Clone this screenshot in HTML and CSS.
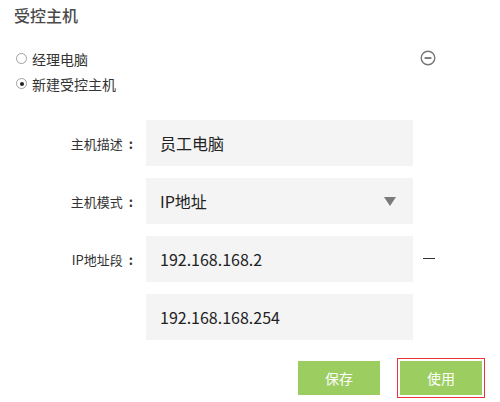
FILE: index.html
```
<!DOCTYPE html>
<html lang="zh-CN">
<head>
<meta charset="utf-8">
<link rel="stylesheet" href="styles.css">
</head>
<body>
<div class="page">
  <div class="title">受控主机</div>
  <div class="radios">
    <div class="radio-row">
      <label class="radio"><span class="dot"></span><span>经理电脑</span></label>
      <svg class="minus-circle" width="16" height="16" viewBox="0 0 16 16"><circle cx="8" cy="8" r="6.8" fill="none" stroke="#777" stroke-width="1.4"/><rect x="4.6" y="7.1" width="6.8" height="1.9" fill="#777"/></svg>
    </div>
    <div class="radio-row">
      <label class="radio"><span class="dot checked"></span><span>新建受控主机</span></label>
    </div>
  </div>
  <div class="form">
    <div class="row">
      <div class="label">主机描述<span class="colon">:</span></div>
      <div class="box">员工电脑</div>
    </div>
    <div class="row">
      <div class="label">主机模式<span class="colon">:</span></div>
      <div class="box select"><span>IP地址</span><span class="tri"></span></div>
    </div>
    <div class="row">
      <div class="label">IP地址段<span class="colon">:</span></div>
      <div class="box">192.168.168.2</div>
      <span class="dash"></span>
    </div>
    <div class="row">
      <div class="label"></div>
      <div class="box">192.168.168.254</div>
    </div>
  </div>
  <div class="buttons">
    <button class="btn">保存</button>
    <div class="highlight"><button class="btn">使用</button></div>
  </div>
</div>
</body>
</html>
```
FILE: styles.css
```
html, body {
  margin: 0;
  padding: 0;
  background: #fff;
}
.page {
  width: 500px;
  height: 402px;
  font-family: "Microsoft YaHei", "Noto Sans CJK SC", sans-serif;
  color: #333;
  display: flex;
  flex-direction: column;
  overflow: hidden;
}
.title {
  font-size: 16px;
  line-height: 20px;
  color: #4a4a4a;
  font-weight: 500;
  padding: 5px 0 0 14px;
}
.radios {
  margin-top: 21px;
  padding-left: 16px;
  padding-right: 64px;
  display: flex;
  flex-direction: column;
}
.radio-row {
  height: 25px;
  display: flex;
  align-items: center;
  justify-content: space-between;
}
.radio {
  display: flex;
  align-items: center;
  gap: 5px;
  font-size: 14px;
  line-height: 18px;
  color: #333;
}
.dot {
  width: 9px;
  height: 9px;
  border: 1px solid #a0a0a0;
  border-radius: 50%;
  background: #fff;
  display: flex;
  align-items: center;
  justify-content: center;
}
.dot.checked::after {
  content: "";
  width: 4px;
  height: 4px;
  border-radius: 50%;
  background: #222;
}
.minus-circle {
  display: block;
  margin-top: -2px;
}
.form {
  margin-top: 24px;
  display: flex;
  flex-direction: column;
  gap: 12px;
}
.row {
  display: flex;
  align-items: center;
  height: 46px;
}
.label {
  width: 133px;
  padding-right: 4px;
  text-align: right;
  font-size: 13px;
  color: #333;
  margin-right: 9px;
}
.colon {
  margin-left: 6px;
  font-weight: 700;
}
.box {
  width: 253px;
  height: 46px;
  background: #f4f4f4;
  padding-left: 14px;
  display: flex;
  align-items: center;
  font-size: 16px;
  color: #222;
}
.select {
  justify-content: space-between;
}
.tri {
  width: 0;
  height: 0;
  border-left: 6px solid transparent;
  border-right: 6px solid transparent;
  border-top: 9px solid #7a7a7a;
  margin-right: 17px;
}
.dash {
  width: 12px;
  height: 1.5px;
  background: #333;
  margin-left: 10px;
  margin-top: -1px;
}
.buttons {
  margin-top: 18px;
  display: flex;
  justify-content: flex-end;
  align-items: center;
  gap: 17px;
  padding-right: 15px;
}
.btn {
  width: 82px;
  height: 34px;
  border: 0;
  margin: 0;
  background: #9ccd61;
  color: #fff;
  font-family: "Microsoft YaHei", "Noto Sans CJK SC", sans-serif;
  font-size: 14px;
  padding: 0;
  display: block;
}
.highlight {
  border: 1.5px solid #e8343a;
  padding: 2px;
}
```
